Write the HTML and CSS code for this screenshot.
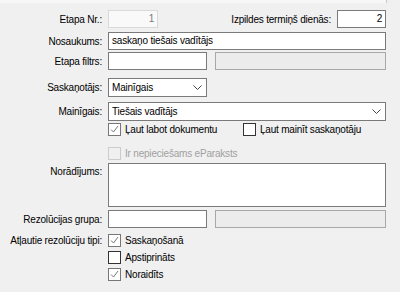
FILE: index.html
```html
<!DOCTYPE html>
<html lang="lv">
<head>
    <meta charset="UTF-8">
    <title>Etaps</title>
    <link rel="stylesheet" href="styles.css">
</head>
<body>
    <div class="topstrip"></div>
    <div class="form">
        <div class="row r-nr">
            <span class="lbl">Etapa Nr.:</span>
            <div class="box ro num small">1</div>
            <span class="lbl-right">Izpildes termiņš dienās:</span>
            <div class="box num days">2</div>
        </div>
        <div class="row r-name">
            <span class="lbl">Nosaukums:</span>
            <div class="box wide">saskaņo tiešais vadītājs</div>
        </div>
        <div class="row r-filter">
            <span class="lbl">Etapa filtrs:</span>
            <div class="box half"></div>
            <div class="box dis rest"></div>
        </div>
        <div class="row r-approver">
            <span class="lbl">Saskaņotājs:</span>
            <div class="box select half">Mainīgais
                <svg class="chev" width="9" height="5" viewBox="0 0 9 5"><path d="M0.5 0.5 L4.5 4.5 L8.5 0.5" fill="none" stroke="#444" stroke-width="1"/></svg>
            </div>
        </div>
        <div class="row r-var">
            <span class="lbl">Mainīgais:</span>
            <div class="box select wide">Tiešais vadītājs
                <svg class="chev" width="9" height="5" viewBox="0 0 9 5"><path d="M0.5 0.5 L4.5 4.5 L8.5 0.5" fill="none" stroke="#444" stroke-width="1"/></svg>
            </div>
        </div>
        <div class="row r-check1">
            <span class="lbl"></span>
            <div class="check first">
                <span class="cb on"><svg width="11" height="11" viewBox="0 0 11 11"><path d="M2 5.5 L4.5 8 L9 2" fill="none" stroke="#777" stroke-width="1"/></svg></span>
                <span class="cbtext">Ļaut labot dokumentu</span>
            </div>
            <div class="check">
                <span class="cb"></span>
                <span class="cbtext">Ļaut mainīt saskaņotāju</span>
            </div>
        </div>
        <div class="row r-check2">
            <span class="lbl"></span>
            <div class="check">
                <span class="cb off"></span>
                <span class="cbtext muted">Ir nepieciešams eParaksts</span>
            </div>
        </div>
        <div class="row r-note">
            <span class="lbl note-lbl">Norādījums:</span>
            <div class="box wide area"></div>
        </div>
        <div class="row r-group">
            <span class="lbl">Rezolūcijas grupa:</span>
            <div class="box half"></div>
            <div class="box dis rest"></div>
        </div>
        <div class="row r-types">
            <span class="lbl">Atļautie rezolūciju tipi:</span>
            <div class="typelist">
                <div class="check">
                    <span class="cb on"><svg width="11" height="11" viewBox="0 0 11 11"><path d="M2 5.5 L4.5 8 L9 2" fill="none" stroke="#777" stroke-width="1"/></svg></span>
                    <span class="cbtext">Saskaņošanā</span>
                </div>
                <div class="check">
                    <span class="cb"></span>
                    <span class="cbtext">Apstiprināts</span>
                </div>
                <div class="check">
                    <span class="cb on"><svg width="11" height="11" viewBox="0 0 11 11"><path d="M2 5.5 L4.5 8 L9 2" fill="none" stroke="#777" stroke-width="1"/></svg></span>
                    <span class="cbtext">Noraidīts</span>
                </div>
            </div>
        </div>
    </div>
</body>
</html>
```

FILE: styles.css
```css
/* Global Styles */
body {
    font-family: "Liberation Sans", Arial, sans-serif;
    font-size: 10px;
    letter-spacing: -0.2px;
    background-color: #f0f0f0;
    color: #000;
    margin: 0;
    padding: 0;
    white-space: nowrap;
}
.topstrip {
    height: 3px;
    width: 386px;
    background-color: #f7f7f7;
    border-right: 1px solid #c8c8c8;
}
.form {
    width: 386px;
    padding-top: 7px;
}
.row {
    display: flex;
    align-items: center;
}
.lbl {
    width: 102px;
    margin-right: 6px;
    text-align: right;
    flex-shrink: 0;
}
.lbl-right {
    margin-left: auto;
    margin-right: 6px;
}
.box {
    box-sizing: border-box;
    height: 18px;
    border: 1px solid #7a7a7a;
    background-color: #fff;
    padding: 0 3px;
    line-height: 16px;
    overflow: hidden;
}
.num {
    text-align: right;
}
.ro {
    border-color: #d9d9d9;
    background-color: #f9f9f9;
    color: #7a7a7a;
}
.dis {
    border-color: #a8a8a8;
    background-color: #ececec;
}
.small {
    width: 50px;
}
.days {
    width: 49px;
}
.wide {
    width: 278px;
}
.half {
    width: 99px;
}
.rest {
    width: 171px;
    margin-left: 8px;
}
.select {
    display: flex;
    align-items: center;
    justify-content: space-between;
    height: 19px;
}
.chev {
    margin-right: 1px;
}
.area {
    height: 44px;
}
.note-lbl {
    align-self: flex-start;
    padding-top: 3px;
}
.check {
    display: flex;
    align-items: center;
    height: 13px;
}
.check.first {
    width: 135px;
}
.cb {
    box-sizing: border-box;
    width: 13px;
    height: 13px;
    border: 1px solid #333;
    background-color: #fff;
    flex-shrink: 0;
    display: flex;
    align-items: center;
    justify-content: center;
}
.cb.on {
    border-color: #777;
}
.cb.off {
    border-color: #ccc;
    background-color: #f0f0f0;
}
.cbtext {
    margin-left: 4px;
}
.muted {
    color: #a0a0a0;
}
.r-nr { height: 18px; }
.r-name { margin-top: 4px; }
.r-filter { margin-top: 2px; }
.r-approver { margin-top: 8px; }
.r-var { margin-top: 5px; }
.r-check1 { margin-top: 2px; }
.r-check2 { margin-top: 11px; }
.r-note { margin-top: 3px; }
.r-group { margin-top: 3px; }
.r-types {
    margin-top: 6px;
    align-items: flex-start;
}
.r-types .lbl {
    line-height: 13px;
}
.typelist {
    display: flex;
    flex-direction: column;
    gap: 4px;
}
```
